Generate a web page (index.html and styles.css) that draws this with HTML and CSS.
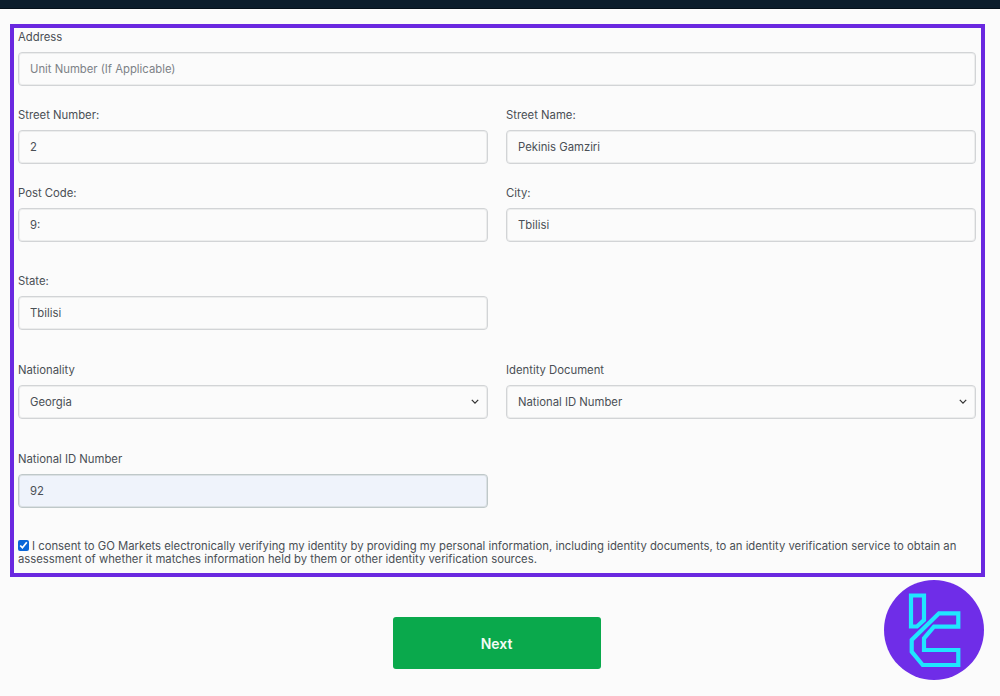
FILE: index.html
```html
<!DOCTYPE html>
<html lang="en">
<head>
<meta charset="utf-8">
<title>Address details</title>
<link rel="stylesheet" href="styles.css">
</head>
<body>
<div class="topbar"></div>
<main class="page">
  <form class="panel">
    <div class="row">
      <div class="field full">
        <label class="label">Address</label>
        <input class="control" placeholder="Unit Number (If Applicable)">
      </div>
    </div>
    <div class="row">
      <div class="field"><label class="label">Street Number:</label><input class="control" value="2"></div>
      <div class="field"><label class="label">Street Name:</label><input class="control" value="Pekinis Gamziri"></div>
    </div>
    <div class="row wide">
      <div class="field"><label class="label">Post Code:</label><input class="control" value="9:"></div>
      <div class="field"><label class="label">City:</label><input class="control" value="Tbilisi"></div>
    </div>
    <div class="row wider">
      <div class="field"><label class="label">State:</label><input class="control" value="Tbilisi"></div>
    </div>
    <div class="row wider">
      <div class="field">
        <label class="label">Nationality</label>
        <div class="select-wrap">
          <select class="control select"><option>Georgia</option></select>
          <svg class="chevron" viewBox="0 0 10 6" width="8" height="5"><path d="M1 1l4 4 4-4" fill="none" stroke="#333" stroke-width="1.6"/></svg>
        </div>
      </div>
      <div class="field">
        <label class="label">Identity Document</label>
        <div class="select-wrap">
          <select class="control select"><option>National ID Number</option></select>
          <svg class="chevron" viewBox="0 0 10 6" width="8" height="5"><path d="M1 1l4 4 4-4" fill="none" stroke="#333" stroke-width="1.6"/></svg>
        </div>
      </div>
    </div>
    <div class="row wider">
      <div class="field"><label class="label">National ID Number</label><input class="control filled" value="92"></div>
    </div>
    <p class="consent"><input class="check" type="checkbox" checked>I consent to GO Markets electronically verifying my identity by providing my personal information, including identity documents, to an identity verification service to obtain an assessment of whether it matches information held by them or other identity verification sources.</p>
  </form>
  <div class="actions"><button class="next" type="button">Next</button></div>
</main>
<svg class="badge" viewBox="0 0 100 100" width="100" height="100" aria-hidden="true">
  <circle cx="50" cy="50" r="50" fill="#6f2de8"/>
  <g fill="none" stroke="#1fe6ff" stroke-width="4.2" stroke-linejoin="miter">
    <path d="M27 15.5H40V40L33 46.5H27Z"/>
    <path d="M74.3 33.3H55L27.7 60V71.7L38.7 85H74.3V70H40V58.3L50 46.7H74.3Z"/>
  </g>
</svg>
</body>
</html>
```

FILE: styles.css
```css
* { box-sizing: border-box; }
html, body { margin: 0; padding: 0; }
body {
  height: 696px;
  overflow: hidden;
  background: #fbfbfb;
  font-family: Inter, "Liberation Sans", sans-serif;
  font-size: 11.3px;
  color: #4a4f55;
  position: relative;
}
.topbar { height: 9px; background: #0c1d2c; border-bottom: 1px solid #05101a; }
.page { padding: 15px 15px 0 10px; }
.panel {
  border: 4px solid #6a28e0;
  padding: 1px 5px 5px 4px;
  height: 553px;
  display: flex;
  flex-direction: column;
}
.row {
  display: grid;
  grid-template-columns: 470px 470px;
  column-gap: 18px;
  margin-bottom: 21px;
}
.row.wide { margin-bottom: 31px; }
.row.wider { margin-bottom: 32px; }
.field.full { grid-column: 1 / -1; }
.label { display: block; height: 16px; line-height: 16px; margin-bottom: 7px; }
.control {
  display: block;
  width: 100%;
  height: 34px;
  padding: 0 11px;
  font: inherit;
  color: #4a4f55;
  background: #fbfbfb;
  border: 1px solid #d2d4d6;
  box-shadow: inset 0 0 0 1px #eceded;
  border-radius: 4px;
  outline: none;
}
.control::placeholder { color: #7d8287; opacity: 1; }
.control.filled { background: #eff3fb; border-color: #bfc8c9; box-shadow: inset 0 0 0 1px #dbe1e5; }
.select-wrap { position: relative; }
.select { appearance: none; -webkit-appearance: none; }
.chevron { position: absolute; right: 9px; top: 14px; }
.consent { margin: 0; line-height: 13px; }
.check { width: 11px; height: 11px; margin: 0 3px 0 0; vertical-align: -1px; accent-color: #0a66d8; }
.actions { display: flex; justify-content: center; padding: 40px 2px 0 0; }
.next {
  width: 208px;
  height: 52px;
  background: #0aa94c;
  color: #f2fbf5;
  border: 0;
  border-radius: 3px;
  font: 600 14px Inter, "Liberation Sans", sans-serif;
}
.badge { position: absolute; left: 884px; top: 580px; }
```
